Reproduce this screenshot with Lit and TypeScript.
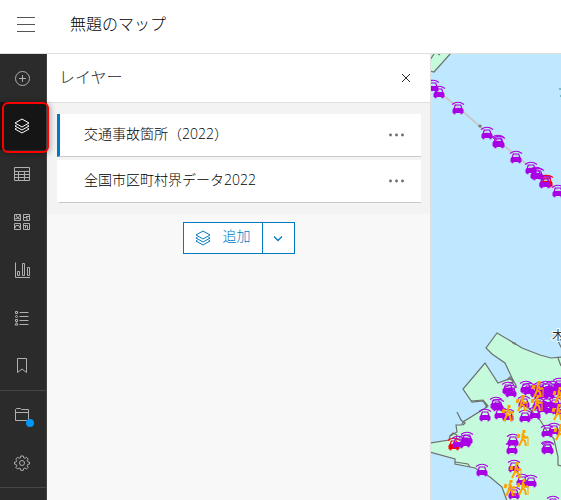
import { LitElement, html, css, svg } from "lit";
import { customElement, property } from "lit/decorators.js";

type Point = [number, number];

const icons: Record<string, unknown> = {
  add: svg`<circle cx="8.5" cy="8.5" r="7" /><path d="M8.5 5v7M5 8.5h7" />`,
  layers: svg`<path d="M8 1 15 5 8 9 1 5ZM2.500 7.200 1 8l7 4 7-4-1.500-.8M2.500 10.200 1 11l7 4 7-4-1.500-.8" />`,
  table: svg`<path d="M.5 1.500h15v13H.5ZM.5 5.500h15M.5 8.500h15M.5 11.500h15M4.500 5v9.500M10.500 5v9.500" />`,
  basemap: svg`<path d="M.5.5h6v6h-6ZM9.500.5h6v6h-6ZM.5 9.500h6v6h-6ZM9.500 9.500h6v6h-6ZM2 1l1.500 3L6 5M1 5l3-1 2-3M10 3.500h3v3M12 2.500h3M1 14l1-2.500h3l1 2.500M10 11.500h3.500v4M11.500 11v3" />`,
  chart: svg`<path d="M1.500.5v15h14.500M3.500 9.500h2v4h-2ZM8.500 1.500h2v12h-2ZM13.500 5.500h2v8h-2Z" />`,
  legend: svg`<path d="M5.500 2.500h9M5.500 6.500h9M5.500 10.500h9M5.500 14.500h9M1.500 1.500h2v2h-2ZM1.500 9.500h2v2h-2ZM1 15l1.500-2.500L4 15Z" /><circle cx="2.500" cy="6.500" r="1" />`,
  bookmark: svg`<path d="M3.500.5h9v14L8 11l-4.500 3.500Z" />`,
  folder: svg`<path d="M1.500 13.500v-11l1-1h4l1 1h7v11ZM1.500 5.500h13" />`,
  settings: svg`<circle cx="8" cy="8" r="2.500" /><path d="M6.700 1h2.600l.4 1.800 1.200.5 1.600-1 1.700 1.800-1 1.500.6 1.200 1.700.4v1.900l-1.800.4-.5 1.300 1 1.500-1.700 1.700-1.600-1-1.200.5-.4 1.800H6.700l-.4-1.800-1.200-.5-1.600 1-1.700-1.700 1-1.500-.5-1.300L.5 9.100V7.200l1.800-.4.5-1.200-1-1.500 1.700-1.800 1.600 1 1.200-.5Z" />`,
  close: svg`<path d="m4 5 8 8M12 5l-8 8" />`,
  chevron: svg`<path d="m4 6.500 4 4 4-4" stroke-width="1.300" />`,
};

@customElement("line-icon")
class LineIcon extends LitElement {
  @property() name = "";
  static styles = css`
    :host { display: block; width: 16px; height: 16px; }
    svg { display: block; fill: none; stroke: currentColor; overflow: visible; }
  `;
  render() {
    return html`<svg width="16" height="16" viewBox="0 0 16 16" aria-hidden="true">${icons[this.name]}</svg>`;
  }
}

@customElement("map-view")
class MapView extends LitElement {
  static styles = css`
    :host { display: block; position: relative; background: #bee8ff; overflow: hidden; }
    svg { position: absolute; inset: 0; width: 100%; height: 100%; }
    .land { fill: #c5fbdc; stroke: #6c706e; stroke-width: 1.2; }
    .coast { fill: none; stroke: #6c706e; stroke-width: 1.2; }
    .bridge { fill: none; stroke: #c6c9c9; stroke-width: 2; }
    .place { font: 12px "Noto Sans CJK JP", sans-serif; fill: #333; stroke: #fff; stroke-width: 2; paint-order: stroke; }
    .car { color: #aa00e6; }
    .alert { color: #f00; }
    .walker { fill: none; stroke: #ffa200; stroke-width: 2; }
  `;

  private bridgeCars: Point[] = [
    [433, 86], [439, 92], [458, 108], [487, 133], [498, 141], [499, 142], [516, 157],
    [531, 168], [536, 173], [538, 174], [545, 181], [558, 191],
  ];
  private cars: Point[] = [
    [508, 388], [511, 391], [526, 387], [529, 389], [536, 391], [540, 388], [543, 393],
    [546, 387], [549, 392], [552, 387], [556, 390], [559, 384], [560, 389], [539, 392],
    [496, 403], [498, 405], [500, 413], [485, 415], [508, 415], [525, 416], [535, 413],
    [524, 402], [538, 404], [543, 407], [547, 402], [550, 408], [555, 403], [560, 409],
    [547, 431], [554, 429], [547, 447], [548, 448], [467, 438], [465, 441], [458, 442],
    [513, 440], [512, 448], [482, 470], [514, 466], [522, 480], [531, 481], [514, 493], [553, 502],
  ];
  private walkers: Point[] = [
    [523, 438], [508, 413], [522, 403], [516, 470], [510, 488], [523, 487],
    [538, 389], [537, 403], [558, 412], [560, 432], [559, 395],
  ];

  private car([x, y]: Point, tone = "car") {
    return svg`<g class=${tone} transform="translate(${x} ${y})">
      <path d="M-6-3.500Q0-8 6-3.500" fill="none" stroke="currentColor" stroke-width="1.200" />
      <path d="M-4 1l1.300-4h5.400L4 1" fill="none" stroke="currentColor" stroke-width="1.200" />
      <path d="M-4 0h8l1.500 1.500V5h-1v1.300h-2V5h-5v1.300h-2V5h-1V1.500Z" fill="currentColor" />
    </g>`;
  }
  private walker([x, y]: Point) {
    return svg`<g class="walker" transform="translate(${x} ${y})">
      <path d="M1-8v3" stroke-width="3" />
      <path d="M0-5-1 2-4 8M-1 1 2 3l1 5M0-4l2 4 3-1" />
      <path d="M-4-4l-1 4" stroke-width="3" />
      <path d="M5-1v9" stroke-width="1" />
    </g>`;
  }

  render() {
    return html`<svg viewBox="431 54 130 446" preserveAspectRatio="xMinYMin slice" role="img" aria-label="マップ">
      <path class="land" d="M430 53H451L434 72L430 71Z" />
      <path class="coast" d="M430 60l4-6M438 54l2 1" />
      <path class="land" d="M497 333L486 348L492 354L505 363L513 380L509 379L498 383L485 363L463 389L472 402L483 401L487 407L463 422L462 425L456 425L457 432L450 436L449 440L430 443V452L455 459V464L470 467L475 468L490 477L502 487L507 501H562V357L551 358L540 355L522 348L514 343Z" />
      <path class="coast" d="M463 425l2-2-4-3-4-8M450 436l3-3 4 2-1 5M455 462l13 2 2 3M507 380l3-3 3 5-4 1M513 380l3 5-2 5M558 358l3 8M562 349l-4-8 4-2M512 343h3v2M471 401l12-1 5 6-3 1M526 405l14 15 7 11 7 8 4 18v8l3 1" />
      <path class="bridge" d="M431 86 458 107 485 131 517 156 561 193" />
      <circle class="coast" cx="480" cy="126" r="1" />
      <path d="M560 88v2M560 96h2" stroke="#278a93" />
      <text class="place" x="552" y="340">木</text>
      ${this.bridgeCars.map((p) => this.car(p))}
      ${this.car([547, 181], "alert")}${this.car([545, 182])}
      ${this.car([454, 444], "alert")}
      ${this.cars.map((p) => this.car(p))}
      ${this.walkers.map((p) => this.walker(p))}
    </svg>`;
  }
}

@customElement("app-root")
class AppRoot extends LitElement {
  static styles = css`
    :host {
      display: flex; flex-direction: column; height: 100vh; overflow: hidden;
      font-family: "Open Sans", "Noto Sans CJK JP", sans-serif; font-weight: 300;
      color: #000; background: #fff;
    }
    * { box-sizing: border-box; }
    button { font: inherit; color: inherit; background: none; border: 0; margin: 0; padding: 0; display: flex; align-items: center; justify-content: center; }
    h1, h2 { margin: 0; font-size: 16px; line-height: 24px; font-weight: inherit; }
    header { display: flex; align-items: center; height: 54px; padding: 0 16px 6px; gap: 34px; border-bottom: 1px solid #dfdfdf; flex: none; }
    .menu { width: 20px; height: 20px; }
    .menu svg { stroke: #555; }
    main { display: flex; flex: 1; min-height: 0; }
    nav { width: 47px; flex: none; background: #2b2b2b; color: #b0b0b0; border-right: 1px solid #404040; }
    .group { border-bottom: 1px solid #474747; }
    .tool { position: relative; width: 100%; height: 48px; padding-right: 2px; }
    .tool.active { background: #151515; color: #fff; }
    .tool.active::after { content: ""; position: absolute; z-index: 1; inset: 0 -3px -3px 2px; border: 2px solid #f00; border-radius: 6px; box-shadow: 1px 1px 6px #0005; }
    .dot { position: absolute; left: 26px; top: 28px; width: 8px; height: 8px; border-radius: 50%; background: #0096f5; }
    aside { flex: none; width: min(384px, 70vw); background: #f8f8f8; border-right: 1px solid #dfdfdf; }
    .head { display: flex; align-items: center; justify-content: space-between; height: 49px; padding: 0 16px 2px 12px; background: #fff; border-bottom: 1px solid #dfdfdf; color: #2a2a2a; }
    .close { width: 16px; height: 16px; }
    ul { list-style: none; margin: 0; padding: 11px 9px 11px 10px; background: #f3f3f3; display: grid; gap: 3px; }
    li { display: flex; align-items: center; justify-content: space-between; height: 43px; padding: 0 16px 2px 24px; border-left: 3px solid #fff; border-bottom: 1px solid #cacaca; background: #fff; font-size: 14px; line-height: 20px; }
    li.selected { border-left-color: #007ac2; }
    .more svg { fill: #6a6a6a; display: block; }
    .actions { display: flex; justify-content: center; padding: 8px 0; }
    .split { display: flex; height: 32px; border: 1px solid #007ac2; background: #fff; color: #007ac2; font-size: 14px; line-height: 20px; }
    .add { gap: 12px; padding: 0 11px; }
    .caption { padding-bottom: 4px; }
    .drop { width: 32px; border-left: 1px solid #007ac2; }
    map-view { flex: 1; }
  `;

  private tool(name: string, label: string, badge = false) {
    const active = name === "layers";
    return html`<button class="tool ${active ? "active" : ""}" aria-label=${label}>
      <line-icon name=${name}></line-icon>${badge ? html`<span class="dot"></span>` : ""}
    </button>`;
  }
  private layer(title: string, selected = false) {
    return html`<li class=${selected ? "selected" : ""}>
      <span>${title}</span>
      <button class="more" aria-label="オプション"><svg width="16" height="16" viewBox="0 0 16 16"><circle cx="1.500" cy="9" r="1.400" /><circle cx="7.500" cy="9" r="1.400" /><circle cx="13.500" cy="9" r="1.400" /></svg></button>
    </li>`;
  }

  render() {
    return html`
      <header>
        <button class="menu" aria-label="メニュー"><svg width="20" height="20" viewBox="0 0 20 20"><path d="M1 3.500h18M1 10.500h18M1 17.500h18" /></svg></button>
        <h1>無題のマップ</h1>
      </header>
      <main>
        <nav>
          <div class="group">
            ${this.tool("add", "追加")}${this.tool("layers", "レイヤー")}${this.tool("table", "テーブル")}
            ${this.tool("basemap", "ベースマップ")}${this.tool("chart", "チャート")}${this.tool("legend", "凡例")}
            ${this.tool("bookmark", "ブックマーク")}
          </div>
          <div class="group">${this.tool("folder", "保存して開く", true)}${this.tool("settings", "マップ プロパティ")}</div>
        </nav>
        <aside>
          <div class="head"><h2>レイヤー</h2><button class="close" aria-label="閉じる"><line-icon name="close"></line-icon></button></div>
          <ul>${this.layer("交通事故箇所（2022）", true)}${this.layer("全国市区町村界データ2022")}</ul>
          <div class="actions"><div class="split">
            <button class="add"><line-icon name="layers"></line-icon><span class="caption">追加</span></button>
            <button class="drop" aria-label="追加オプション"><line-icon name="chevron"></line-icon></button>
          </div></div>
        </aside>
        <map-view></map-view>
      </main>`;
  }
}
